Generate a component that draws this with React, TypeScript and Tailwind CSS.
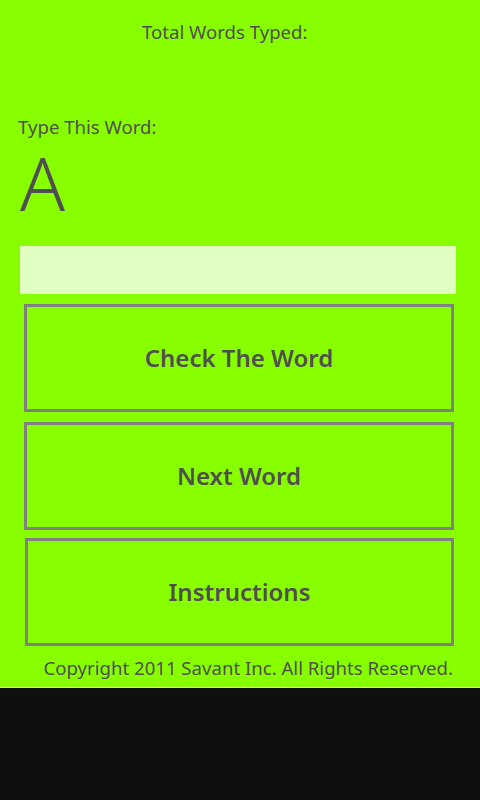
import React from 'react';

const buttons = [
  { label: 'Check The Word', cls: 'mt-0 ml-0' },
  { label: 'Next Word', cls: 'mt-[10px] ml-0' },
  { label: 'Instructions', cls: 'mt-[8px] ml-[1px]' },
];

const App: React.FC = () => {
  return (
    <div className="flex flex-col w-[480px] h-[800px] bg-[#0e0f0f] text-[#4f4f4f]" style={{ fontFamily: '"Noto Sans", "Open Sans", sans-serif' }}>
      <div className="flex flex-col h-[688px] bg-[#88ff00] border-b border-[#e8f5e0]">
        <p className="mt-[20px] ml-[142px] text-[18.6px] leading-[24px]">Total Words Typed:</p>
        <p className="mt-[71px] ml-[18px] text-[18.6px] leading-[24px]">Type This Word:</p>
        <p className="mt-[4px] ml-[20px] text-[74px] leading-[80px] font-light">A</p>
        <div className="mt-[23px] ml-[20px] w-[436px] h-[48px] bg-[#e0ffc0]" />
        <div className="flex flex-col mt-[10px] ml-[24px] w-[430px]">
          {buttons.map((b) => (
            <div key={b.label} className={`flex items-center justify-center h-[108px] border-[3px] border-[#808080] text-[24px] font-semibold ${b.cls}`}>
              {b.label}
            </div>
          ))}
        </div>
        <p className="mt-[10px] mr-[27px] self-end text-[18.6px] leading-[24px]">Copyright 2011 Savant Inc. All Rights Reserved.</p>
      </div>
    </div>
  );
};

export default App;
